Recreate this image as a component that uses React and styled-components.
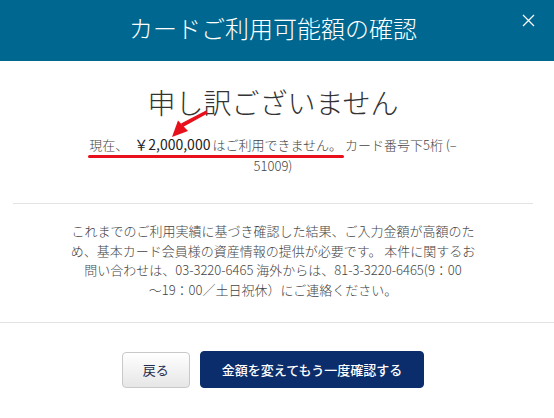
import React from 'react';
import styled, { createGlobalStyle } from 'styled-components';

const GlobalStyle = createGlobalStyle`
  html, body {
    margin: 0;
    padding: 0;
    background: #fff;
  }
  body {
    font-family: "Noto Sans CJK JP", "Noto Sans", sans-serif;
    color: #333;
  }
`;

const Modal = styled.div`
  width: 554px;
  height: 418px;
  display: flex;
  flex-direction: column;
  background: #fff;
  overflow: hidden;
`;

const Header = styled.header`
  position: relative;
  height: 61px;
  flex-shrink: 0;
  display: flex;
  align-items: center;
  justify-content: center;
  padding: 0 21px 0 13px;
  background: #006890;
  box-sizing: border-box;
`;

const Title = styled.h1`
  margin: 0 0 7px;
  font-size: 24px;
  font-weight: 300;
  color: #fff;
`;

const Close = styled.button`
  position: absolute;
  top: 14px;
  right: 19px;
  width: 13px;
  height: 13px;
  padding: 0;
  border: 0;
  background: none;
  cursor: pointer;
  display: flex;
`;

const Body = styled.section`
  flex: 1;
  display: flex;
  flex-direction: column;
  align-items: center;
  padding: 24px 21px 0 13px;
`;

const Heading = styled.h2`
  margin: 0;
  font-size: 28px;
  line-height: 34px;
  font-weight: 300;
  color: #333;
`;

const Notice = styled.p`
  margin: 15px 0 0;
  font-size: 13px;
  line-height: 21px;
  font-weight: 300;
  text-align: center;
  color: #444;
  white-space: nowrap;
`;

const Marked = styled.span`
  position: relative;
  display: inline-block;
  line-height: 21px;

  &::after {
    content: '';
    position: absolute;
    left: -1px;
    right: -2px;
    bottom: -3px;
    height: 3px;
    border-radius: 2px;
    background: #e8101a;
  }
`;

const Amount = styled.span`
  font-size: 14px;
  font-weight: 400;
  color: #222;
  margin: 0 2px 0 6px;
`;

const Arrow = styled.svg`
  position: absolute;
  left: 82px;
  top: -24px;
  width: 38px;
  height: 28px;
  overflow: visible;
`;

const Divider = styled.hr`
  align-self: stretch;
  margin: 27px 0 0;
  border: 0;
  border-top: 1px solid #e3e3e3;
`;

const Message = styled.p`
  margin: 17px 0 0;
  font-size: 13px;
  line-height: 19.5px;
  font-weight: 300;
  text-align: center;
  color: #444;
  white-space: nowrap;
`;

const Footer = styled.footer`
  height: 96px;
  flex-shrink: 0;
  display: flex;
  align-items: center;
  justify-content: center;
  gap: 10px;
  padding: 0 21px 2px 13px;
  border-top: 1px solid #e3e3e3;
  box-sizing: border-box;
`;

const Button = styled.button`
  height: ${(p) => (p.$primary ? '37px' : '36px')};
  padding: 0 ${(p) => (p.$primary ? '21px' : '20px')};
  font-family: inherit;
  font-size: 13px;
  font-weight: ${(p) => (p.$primary ? 500 : 400)};
  border-radius: 4px;
  cursor: pointer;
  color: ${(p) => (p.$primary ? '#fff' : '#1f2d4d')};
  background: ${(p) =>
    p.$primary ? '#0b2d6b' : 'linear-gradient(#ffffff, #e6e6e6)'};
  border: 1px solid ${(p) => (p.$primary ? '#0b2d6b' : '#c9c9c9')};
  min-width: ${(p) => (p.$primary ? '223px' : '68px')};
`;

export default function App() {
  return (
    <>
      <GlobalStyle />
      <Modal>
        <Header>
          <Title>カードご利用可能額の確認</Title>
          <Close aria-label="close">
            <svg width="13" height="13" viewBox="0 0 13 13">
              <path d="M1 1L12 12M12 1L1 12" stroke="#fff" strokeWidth="1.2" />
            </svg>
          </Close>
        </Header>
        <Body>
          <Heading>申し訳ございません</Heading>
          <Notice>
            <Marked>
              現在、<Amount>￥2,000,000</Amount>はご利用できません。
              <Arrow viewBox="0 0 38 28">
                <path d="M35 0.5L36.5 3.5L12 17L10 13.5Z" fill="#e8101a" />
                <path d="M1 27L7 10.5L17 21Z" fill="#e8101a" />
              </Arrow>
            </Marked>{' '}
            カード番号下5桁 (–
            <br />
            51009)
          </Notice>
          <Divider />
          <Message>
            これまでのご利用実績に基づき確認した結果、ご入力金額が高額のた
            <br />
            め、基本カード会員様の資産情報の提供が必要です。 本件に関するお
            <br />
            問い合わせは、03-3220-6465 海外からは、81-3-3220-6465(9：00
            <br />
            ～19：00／土日祝休）にご連絡ください。
          </Message>
        </Body>
        <Footer>
          <Button>戻る</Button>
          <Button $primary>金額を変えてもう一度確認する</Button>
        </Footer>
      </Modal>
    </>
  );
}
